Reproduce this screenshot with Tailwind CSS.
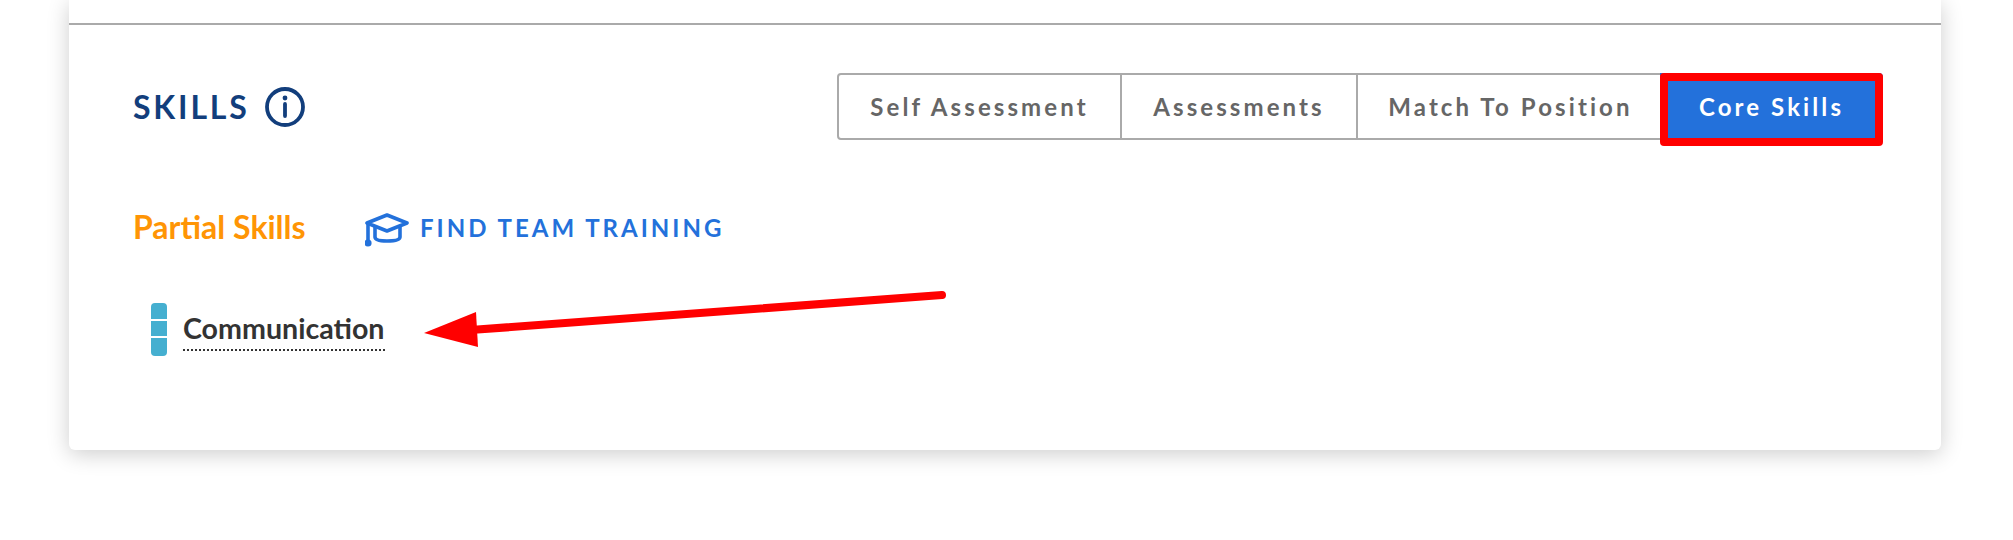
<!DOCTYPE html>
<html lang="en">

<head>
    <meta charset="UTF-8">
    <title>Skills</title>
    <script src="https://cdn.jsdelivr.net/npm/@tailwindcss/browser@4"></script>
</head>

<body class="bg-white h-[540px] overflow-hidden font-['Lato','Liberation_Sans',sans-serif]">
    <div class="relative ml-[69px] w-[1872px] h-[450px] bg-white rounded-b-[6px] shadow-[0_4px_22px_rgba(0,0,0,0.2)]">
        <div class="h-[25px] border-b-2 border-[#aaaaaa]"></div>

        <div class="flex justify-between items-start pt-[48px] pl-[64px] pr-[58px]">
            <div class="flex items-center gap-[15px] h-[67px]">
                <h2 class="text-[32px] leading-none font-bold tracking-[2.8px] text-[#123e7c]">SKILLS</h2>
                <svg class="w-[40px] h-[40px]" viewBox="0 0 40 40" fill="none" stroke="#123e7c" stroke-width="3.8">
                    <circle cx="20" cy="20" r="18"></circle>
                    <path d="M20 17v12" stroke-linecap="round"></path>
                    <circle cx="20" cy="11" r="2.4" fill="#123e7c" stroke="none"></circle>
                </svg>
            </div>

            <div class="flex h-[67px] text-[24px] font-bold tracking-[3.1px] text-[#666666]">
                <div class="w-[285px] flex items-center justify-center border-2 border-[#aaaaaa] rounded-l-[4px]">Self Assessment</div>
                <div class="w-[236px] flex items-center justify-center border-y-2 border-r-2 border-[#aaaaaa]">Assessments</div>
                <div class="w-[302px] pl-[3px] flex items-center justify-center border-y-2 border-[#aaaaaa]">Match To Position</div>
                <div class="w-[223px] flex items-center justify-center bg-[#2371db] text-white rounded-r-[4px]">Core Skills</div>
            </div>
        </div>

        <div class="flex items-center pt-[61px] pl-[64px] h-[112px]">
            <span class="w-[232px] text-[32px] leading-none font-bold text-[#ff9505]">Partial Skills</span>
            <svg class="w-[44px] h-[40px]" viewBox="0 0 44 40" fill="none" stroke="#2371db" stroke-width="3.6" stroke-linejoin="round" stroke-linecap="round">
                <path d="M22 8 42 16 22 24 2 16Z"></path>
                <path d="M10 20v10c0 3 5 4 12 4s13-1 13-4V20"></path>
                <path d="M3 17v18"></path>
                <circle cx="3" cy="36" r="3.6" fill="#2371db" stroke="none"></circle>
            </svg>
            <a class="ml-[11px] mt-[2px] text-[24px] leading-none font-bold tracking-[3px] text-[#2371db]">FIND TEAM TRAINING</a>
        </div>

        <div class="flex items-start pt-[51px] pl-[82px]">
            <div class="flex flex-col gap-[2px] w-[16px]">
                <div class="h-[16px] bg-[#45afd0] rounded-t-[4px]"></div>
                <div class="h-[15px] bg-[#45afd0]"></div>
                <div class="h-[18px] bg-[#45afd0] rounded-b-[4px]"></div>
            </div>
            <span class="ml-[16px] mt-[8px] pb-[4px] text-[28.6px] leading-[34px] font-bold text-[#333333] border-b-2 border-dotted border-[#333333]">Communication</span>
        </div>

        <!-- annotation -->
        <div class="absolute left-[1591px] top-[73px] w-[223px] h-[73px] border-[8px] border-[#ff0000] rounded-[4px]"></div>
        <svg class="absolute left-[340px] top-[280px] w-[560px] h-[80px]" viewBox="0 0 560 80" fill="none">
            <path d="M65 49.8 533 15" stroke="#ff0000" stroke-width="8" stroke-linecap="round"></path>
            <path d="M15 53 67 32 69 67Z" fill="#ff0000"></path>
        </svg>
    </div>
</body>

</html>
